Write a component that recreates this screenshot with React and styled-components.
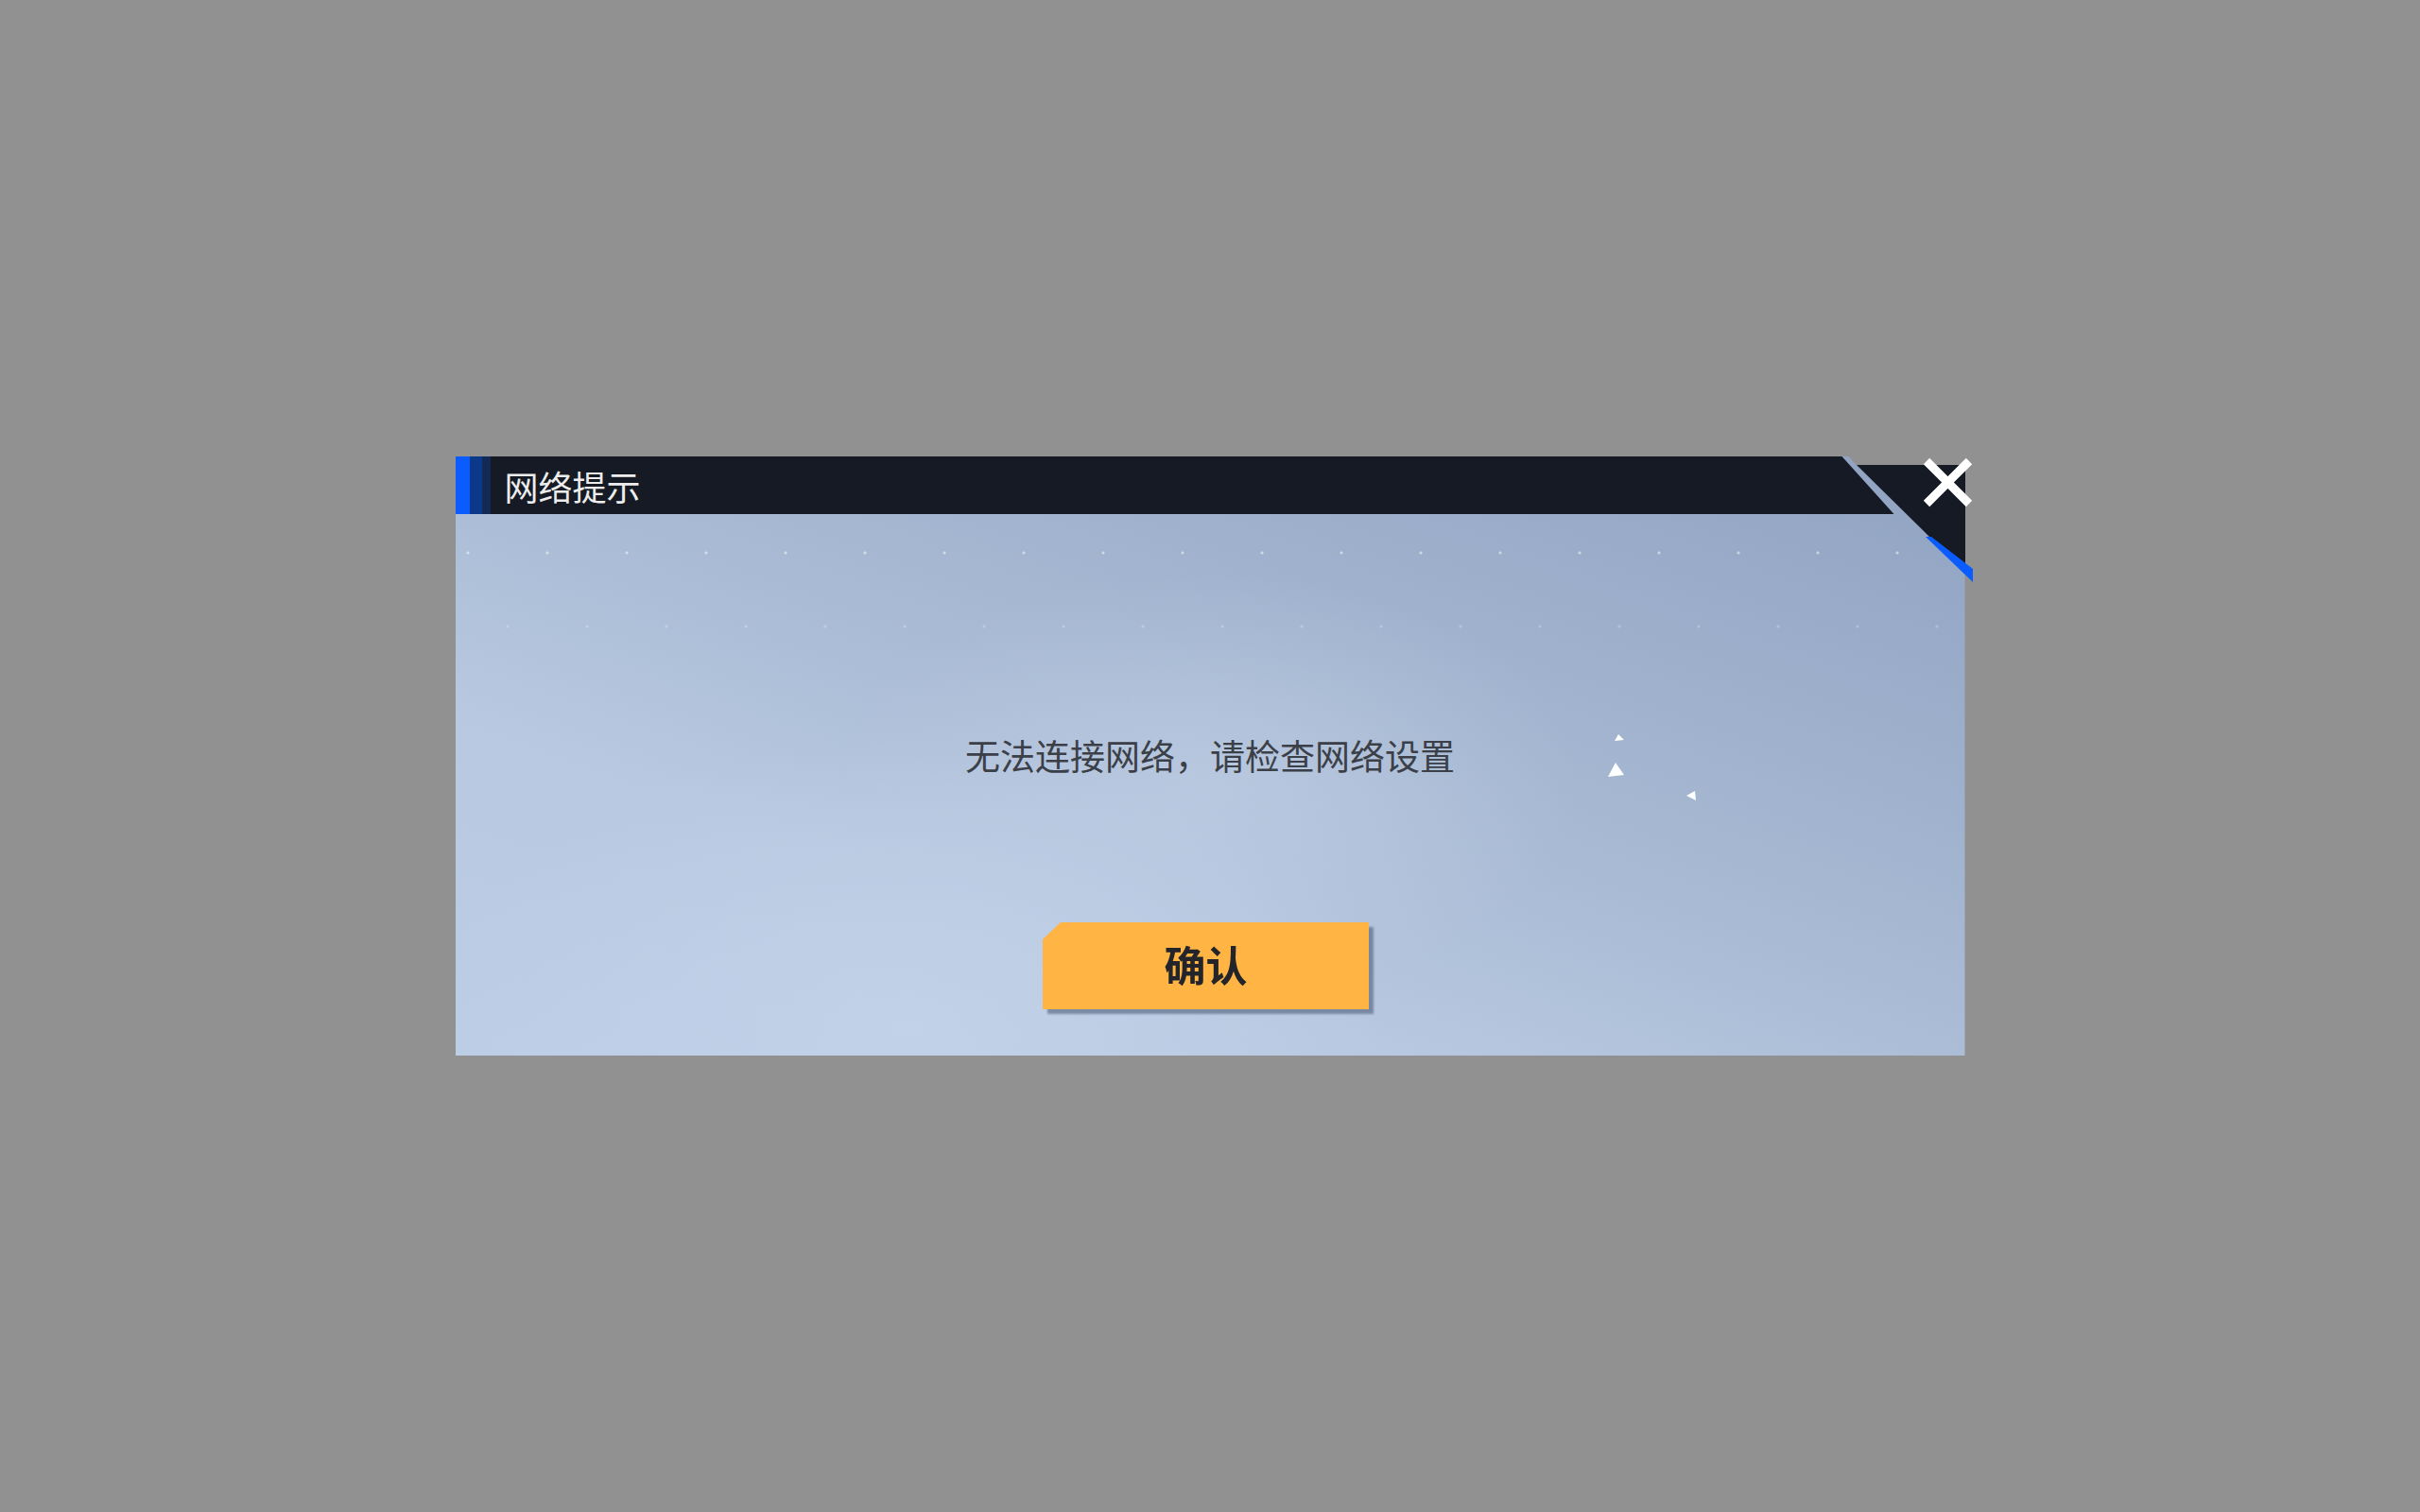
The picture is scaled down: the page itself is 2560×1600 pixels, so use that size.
import styled, { createGlobalStyle } from "styled-components";

const GlobalStyle = createGlobalStyle`
  html, body {
    margin: 0;
    padding: 0;
    background: #919191;
  }
  body {
    font-family: "Noto Sans CJK SC", "Noto Sans", sans-serif;
  }
`;

const Overlay = styled.div`
  width: 100vw;
  height: 100vh;
  display: flex;
  align-items: center;
  justify-content: center;
  background: #919191;
`;

const Frame = styled.div`
  position: relative;
  width: 1597px;
  height: 634px;
`;

const Panel = styled.div`
  width: 100%;
  height: 100%;
  display: flex;
  flex-direction: column;
  clip-path: polygon(0 0, 1474px 0, 1482px 9px, 100% 9px, 100% 100%, 0 100%);
  background:
    radial-gradient(ellipse 720px 430px at 30% 95%, rgba(196, 212, 234, 0.75), transparent 70%),
    radial-gradient(ellipse 560px 320px at 50% 55%, rgba(192, 207, 229, 0.6), transparent 70%),
    linear-gradient(200deg, #8fa2c1 0%, #a4b6d0 40%, #b7c8e0 70%, #bccde6 100%);
`;

const Header = styled.div`
  height: 61px;
  flex: none;
  display: flex;
  align-items: center;
  background: #151a24;
  clip-path: polygon(0 0, 1467px 0, 1522px 100%, 0 100%);
`;

const Stripe = styled.span`
  align-self: stretch;
  width: ${(p) => p.$w}px;
  background: ${(p) => p.$c};
`;

const Title = styled.h2`
  margin: 0 0 0 15px;
  font-size: 36px;
  font-weight: 400;
  line-height: 1;
  color: #ececec;
  padding-top: 1px;
`;

const Body = styled.div`
  flex: 1;
  display: flex;
  flex-direction: column;
  align-items: center;
  padding-top: 229px;
  box-sizing: border-box;
  background:
    radial-gradient(circle, rgba(255, 255, 255, 0.5) 0 1px, transparent 2px) -29px 38px / 84px 6px repeat-x,
    radial-gradient(circle, rgba(255, 255, 255, 0.25) 0 1px, transparent 2px) 13px 116px / 84px 6px repeat-x;
`;

const Message = styled.p`
  margin: 0;
  font-size: 37px;
  line-height: 52px;
  color: #3b3f47;
`;

const ButtonWrap = styled.div`
  margin-top: 151px;
  margin-right: 9px;
  filter: drop-shadow(5px 5px 1px rgba(80, 95, 122, 0.6));
`;

const ConfirmButton = styled.button`
  width: 345px;
  height: 92px;
  border: none;
  padding: 0 0 4px;
  display: flex;
  align-items: center;
  justify-content: center;
  background: #ffb443;
  clip-path: polygon(19px 0, 100% 0, 100% 100%, 0 100%, 0 18px);
  font-family: "Noto Sans CJK SC", sans-serif;
  font-size: 44px;
  font-weight: 700;
  color: #23252b;
  cursor: pointer;
`;

const Corner = styled.svg`
  position: absolute;
  left: 1482px;
  top: 9px;
  overflow: visible;
`;

const CloseButton = styled.button`
  position: absolute;
  left: 1551px;
  top: 0;
  width: 55px;
  height: 55px;
  padding: 0;
  border: none;
  background: transparent;
  cursor: pointer;
  svg {
    display: block;
  }
`;

const Sparkle = styled.svg`
  position: absolute;
  left: ${(p) => p.$x}px;
  top: ${(p) => p.$y}px;
`;

export default function App() {
  return (
    <>
      <GlobalStyle />
      <Overlay>
        <Frame>
          <Panel>
            <Header>
              <Stripe $w={15} $c="#0a5cff" />
              <Stripe $w={13} $c="#0b3889" />
              <Stripe $w={9} $c="#122a58" />
              <Title>网络提示</Title>
            </Header>
            <Body>
              <Message>无法连接网络，请检查网络设置</Message>
              <ButtonWrap>
                <ConfirmButton>确认</ConfirmButton>
              </ButtonWrap>
            </Body>
          </Panel>

          <Corner width="124" height="125" viewBox="0 0 124 125">
            <polygon points="0,0 115,0 115,106 77,76" fill="#151a24" />
            <polygon points="73,76 79,76 123,110 123,124" fill="#0a5cff" />
          </Corner>

          <CloseButton aria-label="关闭">
            <svg width="55" height="55" viewBox="0 0 55 55">
              <path
                d="M5 5 L50 50 M50 5 L5 50"
                stroke="#ffffff"
                strokeWidth="9"
                strokeLinecap="butt"
              />
            </svg>
          </CloseButton>

          <Sparkle $x={1226} $y={294} width="10" height="8" viewBox="0 0 10 8">
            <polygon points="4,0 0,7 10,6" fill="#ffffff" />
          </Sparkle>
          <Sparkle $x={1219} $y={324} width="17" height="15" viewBox="0 0 17 15">
            <polygon points="8,0 0,15 17,13" fill="#ffffff" />
          </Sparkle>
          <Sparkle $x={1302} $y={354} width="11" height="11" viewBox="0 0 11 11">
            <polygon points="0,5 9,0 10,10" fill="#ffffff" />
          </Sparkle>
        </Frame>
      </Overlay>
    </>
  );
}
